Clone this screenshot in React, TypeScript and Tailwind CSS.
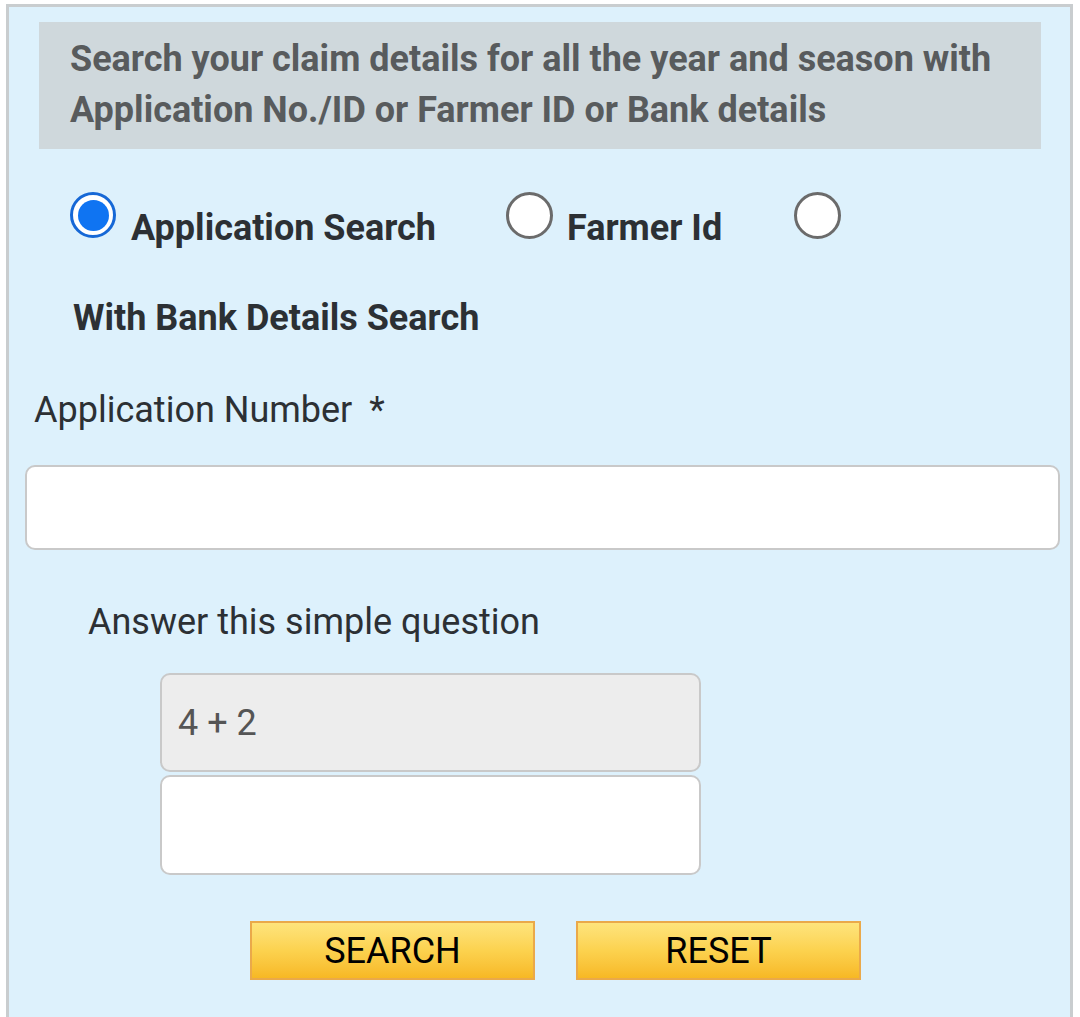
import React from 'react';

const Radio: React.FC<{ checked?: boolean }> = ({ checked }) =>
  checked ? (
    <span className="flex h-[46px] w-[46px] shrink-0 items-center justify-center rounded-full border-[3px] border-[#1668d6] bg-white">
      <span className="h-[31px] w-[31px] rounded-full bg-[#0f74f2]"></span>
    </span>
  ) : (
    <span className="block h-[47px] w-[47px] shrink-0 rounded-full border-[3px] border-[#6b6b6b] bg-white"></span>
  );

const App: React.FC = () => {
  return (
    <div className="min-h-[1017px] bg-white pt-[4px] pl-[6px] font-['Roboto',sans-serif] text-[36px] leading-[50px]">
      <div className="w-[1067px] min-h-[1020px] border-[3px] border-[#c9cdcf] bg-[#ddf1fc]">
        <div className="mt-[15px] ml-[30px] w-[1002px] bg-[#cfd8dc] pt-[12px] pb-[13px] pl-[31px] font-bold leading-[51px] text-[#585b5d]">
          Search your claim details for all the year and season with
          <br />
          Application No./ID or Farmer ID or Bank details
        </div>

        <div className="mt-[43px] ml-[61px] flex items-start">
          <label className="flex items-start">
            <Radio checked />
            <span className="mt-[11px] ml-[15px] font-bold text-[#2c3034]">Application Search</span>
          </label>
          <label className="ml-[70px] flex items-start">
            <Radio />
            <span className="mt-[11px] ml-[14px] font-bold text-[#2c3034]">Farmer Id</span>
          </label>
          <label className="ml-[72px] flex items-start">
            <Radio />
          </label>
        </div>

        <div className="mt-[40px] ml-[64px] font-bold text-[#2c3034]">With Bank Details Search</div>

        <div className="mt-[42px] ml-[25px] text-[#2c3034]">
          Application Number <span className="ml-[8px]">*</span>
        </div>

        <input
          type="text"
          className="mt-[30px] ml-[16px] block h-[85px] w-[1035px] rounded-[10px] border-2 border-[#c9c9c9] bg-white px-4 outline-none"
        />

        <div className="mt-[47px] ml-[79px] text-[#2c3034]">Answer this simple question</div>

        <div className="mt-[26px] ml-[151px] w-[541px]">
          <div className="flex h-[99px] items-center rounded-[10px] border-2 border-[#c9c9c9] bg-[#ededed] pl-[16px] text-[#555]">
            4 + 2
          </div>
          <input
            type="text"
            className="mt-[3px] block h-[100px] w-full rounded-[10px] border-2 border-[#c9c9c9] bg-white px-4 outline-none"
          />
        </div>

        <div className="mt-[46px] ml-[241px] flex gap-[41px]">
          <button className="h-[59px] w-[285px] border-2 border-[#eaa94a] bg-gradient-to-b from-[#fee47c] via-[#fcd24e] to-[#f7b823] text-[36px] leading-none text-black">
            SEARCH
          </button>
          <button className="h-[59px] w-[285px] border-2 border-[#eaa94a] bg-gradient-to-b from-[#fee47c] via-[#fcd24e] to-[#f7b823] text-[36px] leading-none text-black">
            RESET
          </button>
        </div>
      </div>
    </div>
  );
};

export default App;
